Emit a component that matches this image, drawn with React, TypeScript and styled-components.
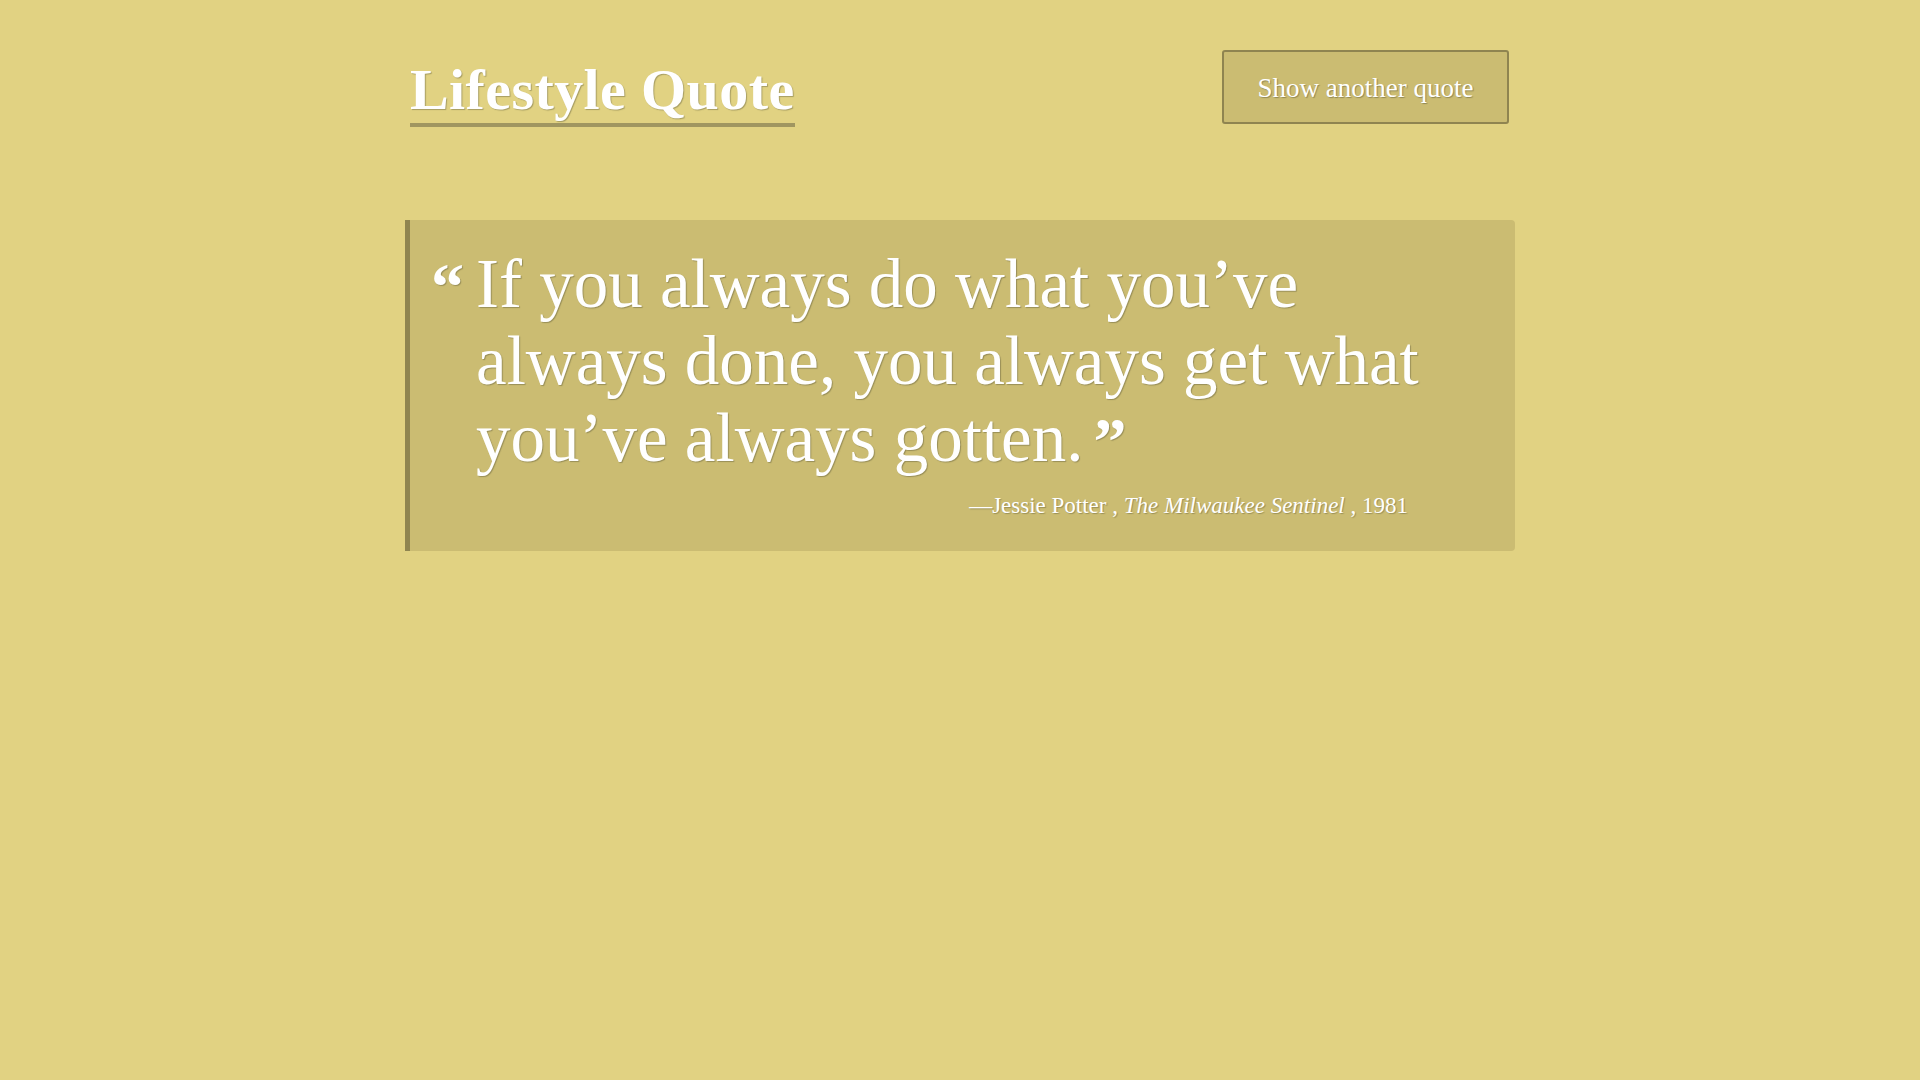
import React from "react";
import styled, { createGlobalStyle } from "styled-components";

const GlobalStyle = createGlobalStyle`
  html, body {
    margin: 0;
    padding: 0;
    background: #e1d282;
    min-height: 100%;
  }
  body {
    font-family: "Liberation Serif", "DejaVu Serif", serif;
    color: #ffffff;
  }
`;

const Page = styled.div`
  min-height: 1080px;
  background: #e1d282;
`;

const Container = styled.main`
  width: 1110px;
  margin: 0 auto;
  display: flex;
  flex-direction: column;
`;

const Header = styled.header`
  display: flex;
  justify-content: space-between;
  align-items: flex-start;
  padding: 50px 6px 0 5px;
  height: 126px;
  box-sizing: border-box;
`;

const Title = styled.h1`
  margin: 11px 0 0;
  font-family: "Liberation Serif", serif;
  font-weight: 700;
  font-size: 58px;
  line-height: 1;
  color: #ffffff;
  text-shadow: 1px 1px 1px rgba(60, 60, 40, 0.35);
  padding-bottom: 4px;
  border-bottom: 4px solid #a09660;
  letter-spacing: 0.4px;
`;

const Button = styled.button`
  width: 287px;
  height: 74px;
  background: #cbbc72;
  border: 2px solid #8f8450;
  border-radius: 3px;
  color: #ffffff;
  font-family: "Liberation Serif", serif;
  font-size: 27px;
  text-shadow: 1px 1px 1px rgba(60, 60, 40, 0.4);
  cursor: pointer;
  padding: 2px 0 0;
`;

const QuoteBox = styled.blockquote`
  margin: 94px 0 0;
  background: #cbbc72;
  border-left: 5px solid #8f8550;
  border-radius: 0 4px 4px 0;
  padding: 26px 40px 32px 21px;
  display: flex;
  flex-direction: column;
`;

const QuoteRow = styled.div`
  display: flex;
  align-items: flex-start;
`;

const OpenMark = styled.span`
  font-family: "Liberation Serif", serif;
  font-weight: 700;
  font-size: 66px;
  line-height: 1;
  width: 45px;
  flex: none;
  margin-top: 8px;
  text-shadow: 1px 1px 1px rgba(60, 60, 40, 0.35);
`;

const QuoteText = styled.p`
  margin: 0;
  font-family: "Liberation Serif", serif;
  font-size: 69px;
  line-height: 77px;
  color: #ffffff;
  text-shadow: 1px 1px 1px rgba(60, 60, 40, 0.35);
  max-width: 1040px;
`;

const CloseMark = styled.span`
  display: inline-block;
  font-weight: 700;
  font-size: 66px;
  vertical-align: top;
  line-height: 1;
  margin: 8px 0 0 10px;
`;

const Cite = styled.footer`
  align-self: flex-end;
  margin: 16px 67px 0 0;
  font-family: "Liberation Serif", serif;
  font-size: 23px;
  color: #ffffff;
  text-shadow: 1px 1px 1px rgba(60, 60, 40, 0.35);
`;

const Source = styled.cite`
  font-style: italic;
`;

export default function App() {
  return (
    <Page>
      <GlobalStyle />
      <Container>
        <Header>
          <Title>Lifestyle Quote</Title>
          <Button>Show another quote</Button>
        </Header>
        <QuoteBox>
          <QuoteRow>
            <OpenMark>“</OpenMark>
            <QuoteText>
              If you always do what you’ve
              <br />
              always done, you always get what
              <br />
              you’ve always gotten.<CloseMark>”</CloseMark>
            </QuoteText>
          </QuoteRow>
          <Cite>
            —Jessie Potter , <Source>The Milwaukee Sentinel</Source> , 1981
          </Cite>
        </QuoteBox>
      </Container>
    </Page>
  );
}
